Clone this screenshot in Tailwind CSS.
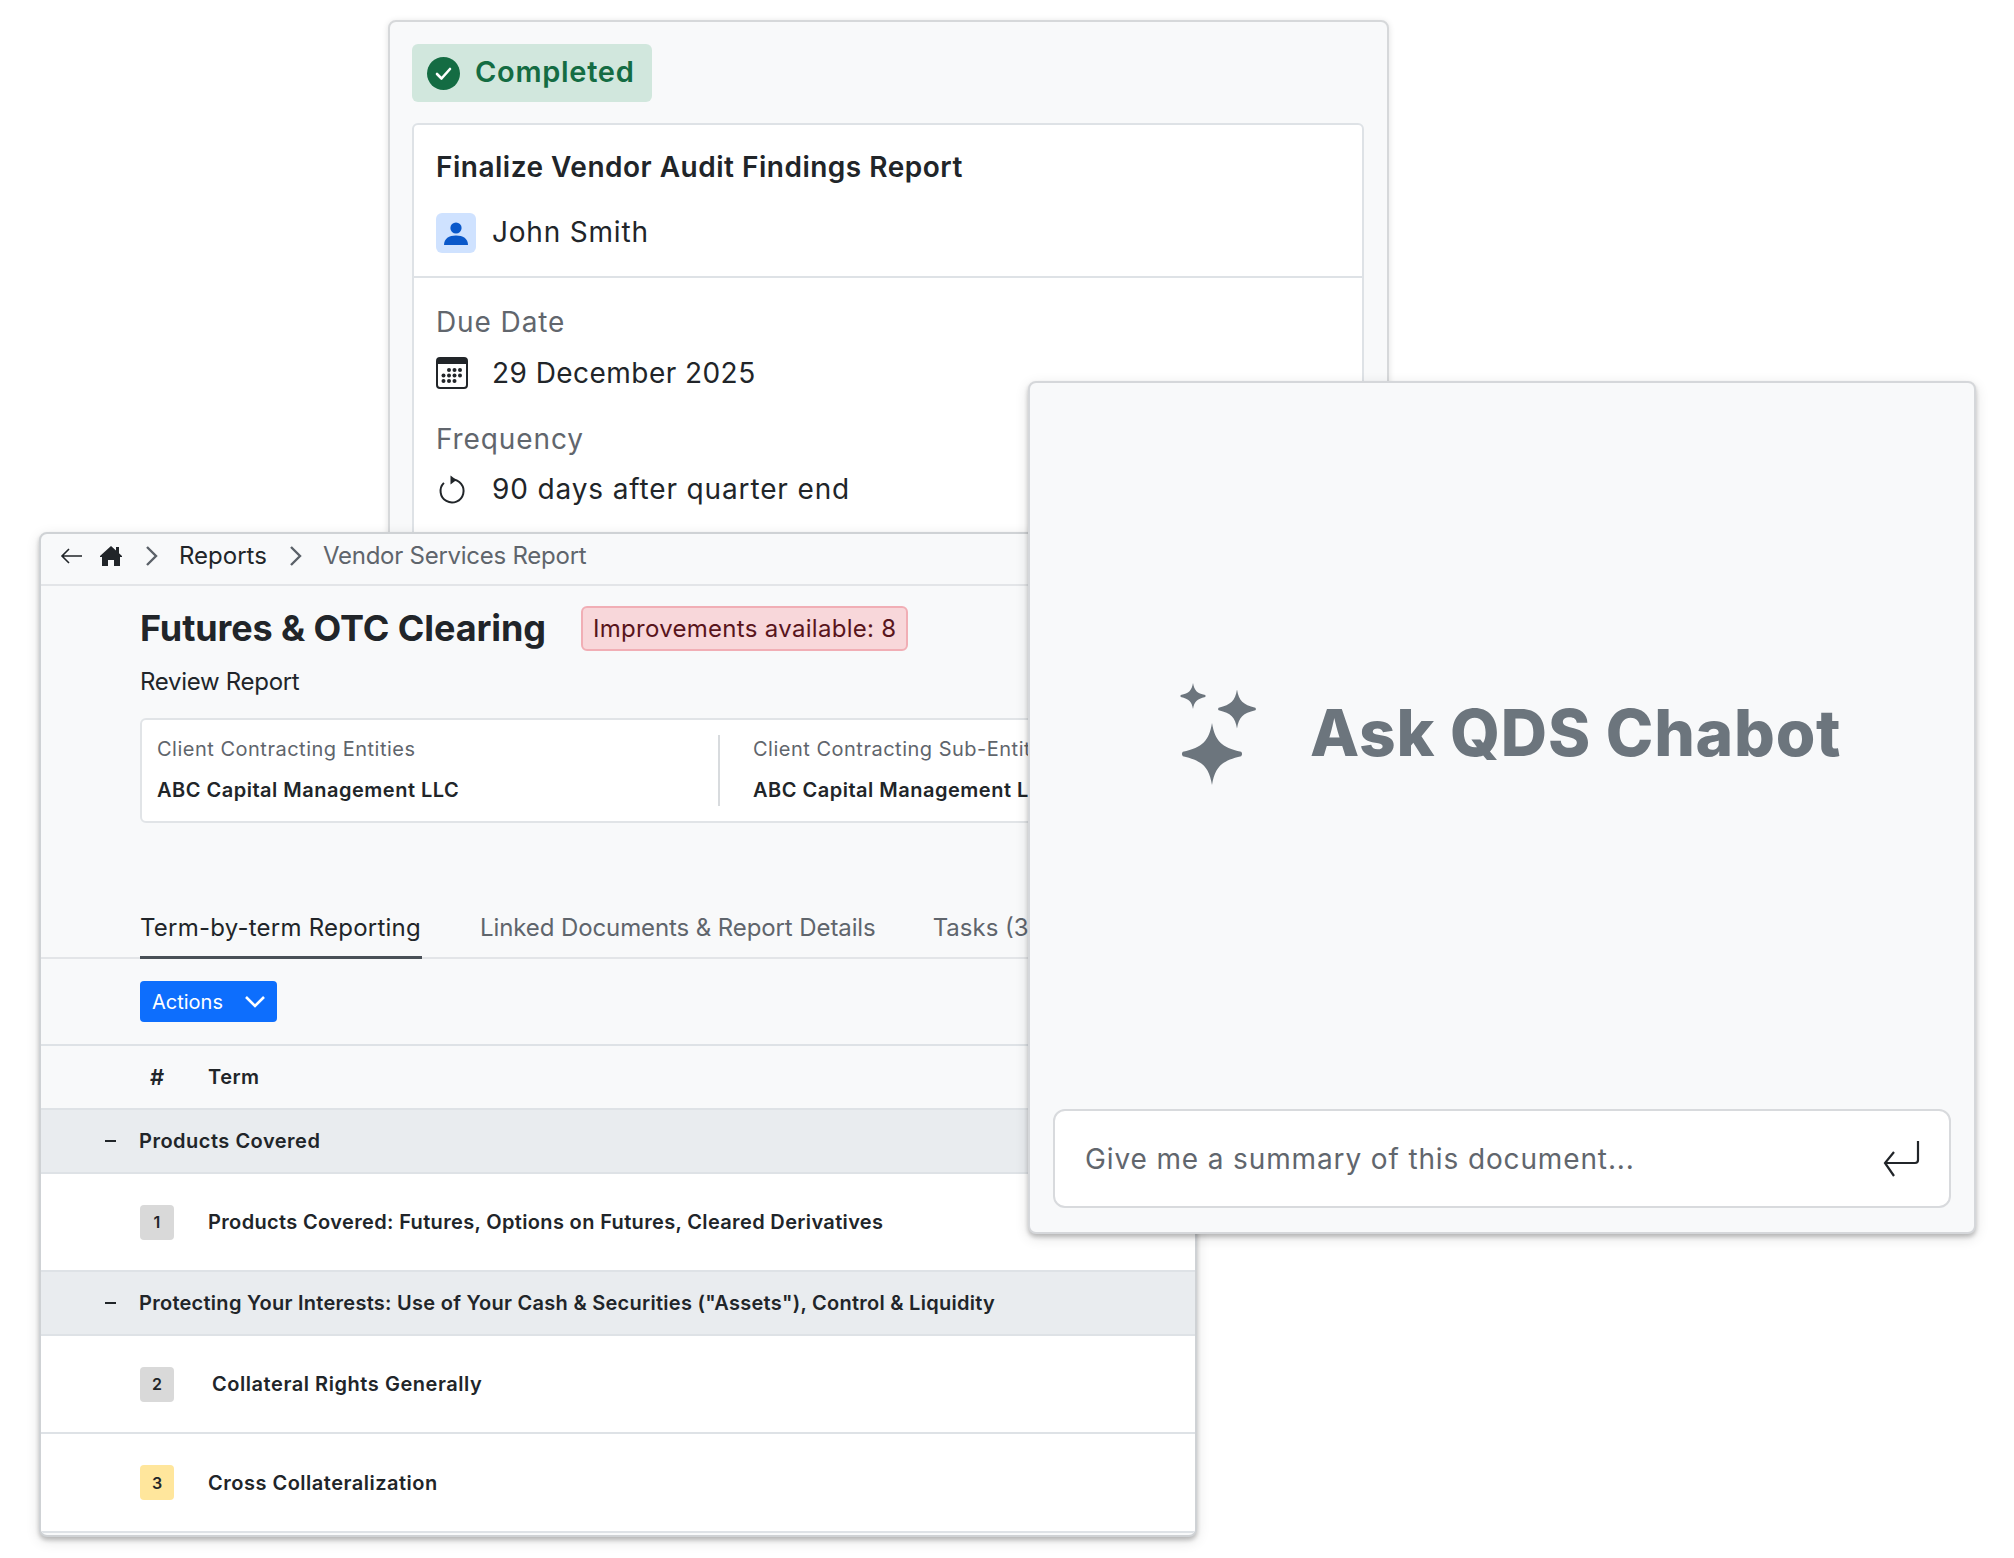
<!DOCTYPE html>
<html lang="en">
<head>
    <meta charset="UTF-8">
    <meta name="viewport" content="width=device-width, initial-scale=1.0">
    <title>QDS Report</title>
    <script src="https://cdn.jsdelivr.net/npm/@tailwindcss/browser@4"></script>
</head>
<body class="bg-white font-['Inter',sans-serif] text-[#212529]">
    <div class="relative w-[2014px] h-[1558px] overflow-hidden">

        <!-- task window -->
        <section class="absolute left-[388px] top-[20px] w-[1001px] h-[540px] bg-[#f8f9fa] border-2 border-[#d6d8da] rounded-lg shadow-[0_1px_6px_rgba(0,0,0,0.12)] p-[22px]">
            <div class="flex items-center gap-[15px] w-[240px] h-[58px] pl-[15px] rounded-md bg-[#d1e7dd] text-[#146c43]">
                <svg class="w-[33px] h-[33px]" viewBox="0 0 33 33"><circle cx="16.5" cy="16.5" r="16.5" fill="#146c43"/><path d="M10 17l4.500 4.500L23 12" fill="none" stroke="#fff" stroke-width="2.600" stroke-linecap="round" stroke-linejoin="round"/></svg>
                <span class="text-[29px] font-semibold tracking-[0.7px] -mt-[2px]">Completed</span>
            </div>
            <div class="mt-[21px] w-[952px] h-[460px] bg-white border-2 border-[#dee2e6] rounded-md">
                <div class="h-[153px] px-[22px] pt-[24px] border-b-2 border-[#dee2e6]">
                    <h2 class="text-[28px] leading-[36px] font-semibold tracking-[0.5px]">Finalize Vendor Audit Findings Report</h2>
                    <div class="flex items-center gap-[16px] mt-[28px]">
                        <div class="flex items-center justify-center w-[40px] h-[40px] rounded-md bg-[#cfe2ff]">
                            <svg class="w-[26px] h-[26px]" viewBox="0 0 26 26" fill="#0a58ca"><circle cx="13" cy="8" r="5.600"/><path d="M1 25c0-6.500 5-9.500 12-9.500S25 18.500 25 25z"/></svg>
                        </div>
                        <span class="text-[28px] tracking-[0.8px] -mt-[2px]">John Smith</span>
                    </div>
                </div>
                <div class="px-[22px] pt-[26px]">
                    <p class="text-[28px] leading-[36px] text-[#61666d] tracking-[0.9px]">Due Date</p>
                    <div class="flex items-center gap-[24px] mt-[15px] h-[36px]">
                        <svg class="w-[32px] h-[32px]" viewBox="0 0 32 32"><rect x="1" y="1" width="30" height="30" rx="3" fill="#fff" stroke="#212529" stroke-width="2"/><path d="M1 4a3 3 0 013-3h24a3 3 0 013 3v3H1z" fill="#212529"/><g fill="#212529"><circle cx="13" cy="13" r="2"/><circle cx="18.500" cy="13" r="2"/><circle cx="24" cy="13" r="2"/><circle cx="7.500" cy="18.500" r="2"/><circle cx="13" cy="18.500" r="2"/><circle cx="18.500" cy="18.500" r="2"/><circle cx="24" cy="18.500" r="2"/><circle cx="7.500" cy="24" r="2"/><circle cx="13" cy="24" r="2"/><circle cx="18.500" cy="24" r="2"/></g></svg>
                        <span class="text-[28px] tracking-[0.45px] -mt-[1px]">29 December 2025</span>
                    </div>
                    <p class="text-[28px] leading-[36px] text-[#61666d] tracking-[0.9px] mt-[30px]">Frequency</p>
                    <div class="flex items-center gap-[24px] mt-[14px] h-[36px]">
                        <svg class="w-[32px] h-[32px]" viewBox="0 0 32 32" fill="none" stroke="#212529" stroke-width="2"><path d="M16 6.500A11.500 11.500 0 1 1 7.900 9.900"/><path d="M14.500 2.500l6 4.500-6 4.500z" fill="#212529" stroke="none"/></svg>
                        <span class="text-[28px] tracking-[0.86px] -mt-[1px]">90 days after quarter end</span>
                    </div>
                </div>
            </div>
        </section>

        <!-- report window -->
        <section class="absolute left-[39px] top-[532px] w-[1158px] h-[1005px] bg-[#f8f9fa] border-2 border-[#cfd2d5] rounded-lg shadow-[0_3px_4px_rgba(0,0,0,0.22),0_4px_14px_rgba(0,0,0,0.12)] overflow-hidden flex flex-col">
            <nav class="flex items-center h-[52px] pb-[7px] shrink-0 border-b-2 border-[#e3e5e8] text-[24px]">
                <svg class="ml-[19px] w-[22px] h-[18px]" viewBox="0 0 22 18" fill="none" stroke="#212529" stroke-width="1.600"><path d="M22 9H2M9 2L2 9l7 7"/></svg>
                <svg class="ml-[18px] w-[22px] h-[22px]" viewBox="0 0 22 22" fill="#212529"><path d="M11 1l5 4.500V2h3v6.200L22 11v1h-2v9h-6v-6H8v6H2v-9H0v-1z"/></svg>
                <svg class="ml-[23px] w-[14px] h-[22px]" viewBox="0 0 14 22" fill="none" stroke="#5b6168" stroke-width="2.400"><path d="M2 2l9 9-9 9"/></svg>
                <span class="ml-[20px]">Reports</span>
                <svg class="ml-[22px] w-[14px] h-[22px]" viewBox="0 0 14 22" fill="none" stroke="#5b6168" stroke-width="2.400"><path d="M2 2l9 9-9 9"/></svg>
                <span class="ml-[20px] text-[#5f656c] tracking-[-0.25px]">Vendor Services Report</span>
            </nav>
            <div class="pl-[99px] pt-[19px] h-[325px] shrink-0">
                <div class="flex items-center h-[46px]">
                    <h1 class="text-[36px] font-bold tracking-[-0.1px]">Futures &amp; OTC Clearing</h1>
                    <span class="ml-[35px] flex items-center h-[45px] pt-[2px] px-[10px] border-2 border-[#f1aeb5] rounded-md bg-[#f8d7da] text-[#58151c] text-[24px] tracking-[0.3px]">Improvements available: 8</span>
                </div>
                <p class="mt-[15px] text-[24px] leading-[32px] tracking-[-0.3px]">Review Report</p>
                <div class="mt-[20px] flex w-[1040px] h-[105px] bg-white border-2 border-[#e1e4e7] rounded-md py-[15px]">
                    <div class="w-[578px] pl-[15px] border-r-2 border-[#d8dbde]">
                        <p class="text-[20px] leading-[28px] text-[#5f656c] tracking-[0.5px]">Client Contracting Entities</p>
                        <p class="mt-[13px] text-[20px] leading-[28px] font-semibold tracking-[0.5px]">ABC Capital Management LLC</p>
                    </div>
                    <div class="pl-[33px]">
                        <p class="text-[20px] leading-[28px] text-[#5f656c] tracking-[0.5px] whitespace-nowrap">Client Contracting Sub-Entities</p>
                        <p class="mt-[13px] text-[20px] leading-[28px] font-semibold tracking-[0.5px] whitespace-nowrap">ABC Capital Management LLC</p>
                    </div>
                </div>
            </div>
            <div class="flex gap-[58px] h-[49px] -mt-[1px] pl-[99px] border-b-2 border-[#e3e5e8] shrink-0 text-[24px] text-[#5f656c]">
                <span class="h-[49px] w-[282px] border-b-[3px] border-[#495057] text-[#212529] tracking-[0.23px] whitespace-nowrap">Term-by-term Reporting</span>
                <span class="tracking-[-0.1px] whitespace-nowrap">Linked Documents &amp; Report Details</span>
                <span class="-ml-[1px] whitespace-nowrap">Tasks (3)</span>
            </div>
            <div class="flex items-center h-[87px] pl-[99px] shrink-0 border-b-2 border-[#dee2e6]">
                <button class="flex items-center justify-between w-[137px] h-[41px] px-[12px] rounded bg-[#0d6efd] text-white text-[20px]">
                    <span>Actions</span>
                    <svg class="w-[20px] h-[12px]" viewBox="0 0 20 12" fill="none" stroke="#fff" stroke-width="2.600"><path d="M1 1l9 9 9-9"/></svg>
                </button>
            </div>
            <div class="flex items-center h-[64px] shrink-0 text-[20px] font-semibold border-b-2 border-[#dee2e6]">
                <span class="w-[34px] ml-[99px] text-center text-[22px]">#</span>
                <span class="ml-[34px] tracking-[0.5px]">Term</span>
            </div>
            <div class="flex items-center h-[64px] shrink-0 bg-[#e9ecef] border-b-2 border-[#dee2e6] text-[20px] font-semibold">
                <span class="ml-[64px] w-[11px] h-[2px] bg-[#212529]"></span>
                <span class="ml-[23px] tracking-[0.5px]">Products Covered</span>
            </div>
            <div class="flex items-center h-[98px] shrink-0 bg-white border-b-2 border-[#dee2e6] text-[20px] font-semibold">
                <span class="flex items-center justify-center ml-[99px] w-[34px] h-[35px] rounded bg-[#d9d9d9] text-[16px]">1</span>
                <span class="ml-[34px] tracking-[0.35px] whitespace-nowrap">Products Covered: Futures, Options on Futures, Cleared Derivatives</span>
            </div>
            <div class="flex items-center h-[64px] shrink-0 bg-[#e9ecef] border-b-2 border-[#dee2e6] text-[20px] font-semibold">
                <span class="ml-[64px] w-[11px] h-[2px] bg-[#212529]"></span>
                <span class="ml-[23px] tracking-[0.27px] whitespace-nowrap">Protecting Your Interests: Use of Your Cash &amp; Securities ("Assets"), Control &amp; Liquidity</span>
            </div>
            <div class="flex items-center h-[98px] shrink-0 bg-white border-b-2 border-[#dee2e6] text-[20px] font-semibold">
                <span class="flex items-center justify-center ml-[99px] w-[34px] h-[35px] rounded bg-[#d9d9d9] text-[16px]">2</span>
                <span class="ml-[38px] tracking-[0.55px]">Collateral Rights Generally</span>
            </div>
            <div class="flex items-center h-[99px] shrink-0 bg-white border-b-2 border-[#dee2e6] text-[20px] font-semibold">
                <span class="flex items-center justify-center ml-[99px] w-[34px] h-[35px] rounded bg-[#ffe69c] text-[16px]">3</span>
                <span class="ml-[34px] tracking-[0.5px]">Cross Collateralization</span>
            </div>
        </section>

        <!-- chat window -->
        <section class="absolute left-[1028px] top-[381px] w-[948px] h-[853px] bg-[#f8f9fa] border-2 border-[#d5d7da] rounded-lg shadow-[0_3px_4px_rgba(0,0,0,0.22),0_4px_14px_rgba(0,0,0,0.12)] flex flex-col">
            <div class="flex items-start h-[726px] pl-[150px] pt-[300px] text-[#6c757d]">
                <svg class="w-[76px] h-[102px] shrink-0" viewBox="0 0 76 102" fill="#6c757d">
                    <path transform="translate(32 71) scale(31)" d="M0-1C.1-.42.3-.22.94-.07Q1 0 .94.07C.3.22.1.42 0 1C-.1.42-.3.22-.94.07Q-1 0-.94-.07C-.3-.22-.1-.42 0-1Z"/>
                    <path transform="translate(57 26) scale(19.500)" d="M0-1C.1-.42.3-.22.94-.07Q1 0 .94.07C.3.22.1.42 0 1C-.1.42-.3.22-.94.07Q-1 0-.94-.07C-.3-.22-.1-.42 0-1Z"/>
                    <path transform="translate(13 13) scale(13)" d="M0-1C.1-.42.3-.22.94-.07Q1 0 .94.07C.3.22.1.42 0 1C-.1.42-.3.22-.94.07Q-1 0-.94-.07C-.3-.22-.1-.42 0-1Z"/>
                </svg>
                <h2 class="ml-[54px] mt-[10px] text-[64px] leading-[80px] font-extrabold tracking-[0.8px] whitespace-nowrap">Ask QDS Chabot</h2>
            </div>
            <div class="flex items-center justify-between mx-[23px] h-[99px] bg-white border-2 border-[#d8dadd] rounded-xl pl-[30px] pr-[29px]">
                <span class="text-[28px] text-[#61666d] tracking-[0.87px]">Give me a summary of this document...</span>
                <svg class="w-[37px] h-[38px]" viewBox="0 0 37 38" fill="none" stroke="#212529" stroke-width="2.200"><path d="M35 1v19a3 3 0 01-3 3H3M11 12L2 23l9 13"/></svg>
            </div>
        </section>
    </div>
</body>
</html>
